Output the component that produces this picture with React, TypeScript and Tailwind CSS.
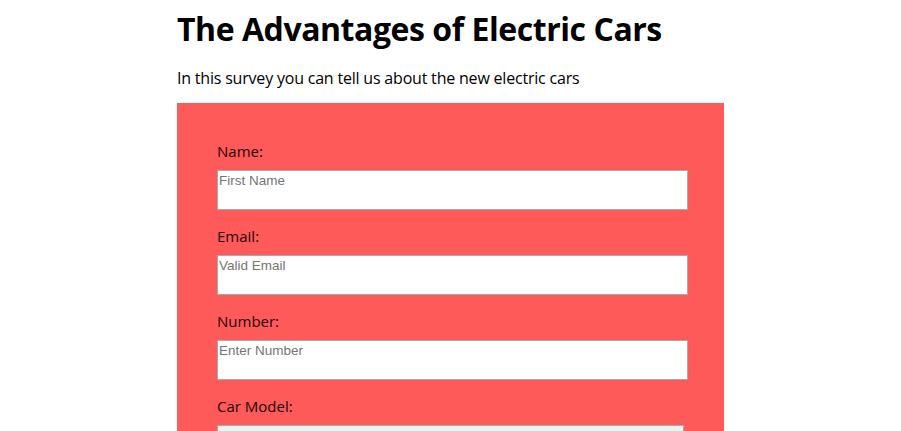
const fields = [
  { label: "Name:", placeholder: "First Name", type: "text" },
  { label: "Email:", placeholder: "Valid Email", type: "email" },
  { label: "Number:", placeholder: "Enter Number", type: "number" },
];

export default function App() {
  return (
    <div className="min-h-screen bg-white font-['Open_Sans',sans-serif] text-black">
      <div className="mx-auto w-[547px]">
        <h1 className="pt-[9px] text-[32px] leading-[40px] font-bold tracking-[-0.45px]">
          The Advantages of Electric Cars
        </h1>
        <p className="mt-[19px] text-[16px] leading-[20px] tracking-[-0.2px]">
          In this survey you can tell us about the new electric cars
        </p>

        <form className="mt-[15px] bg-[#ff5a5a] pt-[38px] pr-[36px] pb-10 pl-[40px]">
          {fields.map((f) => (
            <div key={f.label} className="mb-[16px]">
              <label className="block text-[15px] leading-[20px] text-[#1c0606]">
                {f.label}
              </label>
              <input
                type={f.type}
                placeholder={f.placeholder}
                className="mt-[9px] block h-[40px] w-[471px] border border-[#a9a9a9] bg-white px-[1px] pt-0 pb-[20px] font-['Liberation_Sans',sans-serif] text-[13.5px] placeholder:text-[#757575] outline-none"
              />
            </div>
          ))}
          <div>
            <label className="block text-[15px] leading-[20px] text-[#1c0606]">
              Car Model:
            </label>
            <select className="mt-[9px] block h-[22px] w-[467px] border border-[#a9a9a9] bg-[#f0f0f0] px-[1px] font-['Liberation_Sans',sans-serif] text-[13px]">
              <option>Tesla Model S</option>
              <option>Nissan Leaf</option>
              <option>Chevrolet Bolt</option>
            </select>
          </div>
        </form>
      </div>
    </div>
  );
}
